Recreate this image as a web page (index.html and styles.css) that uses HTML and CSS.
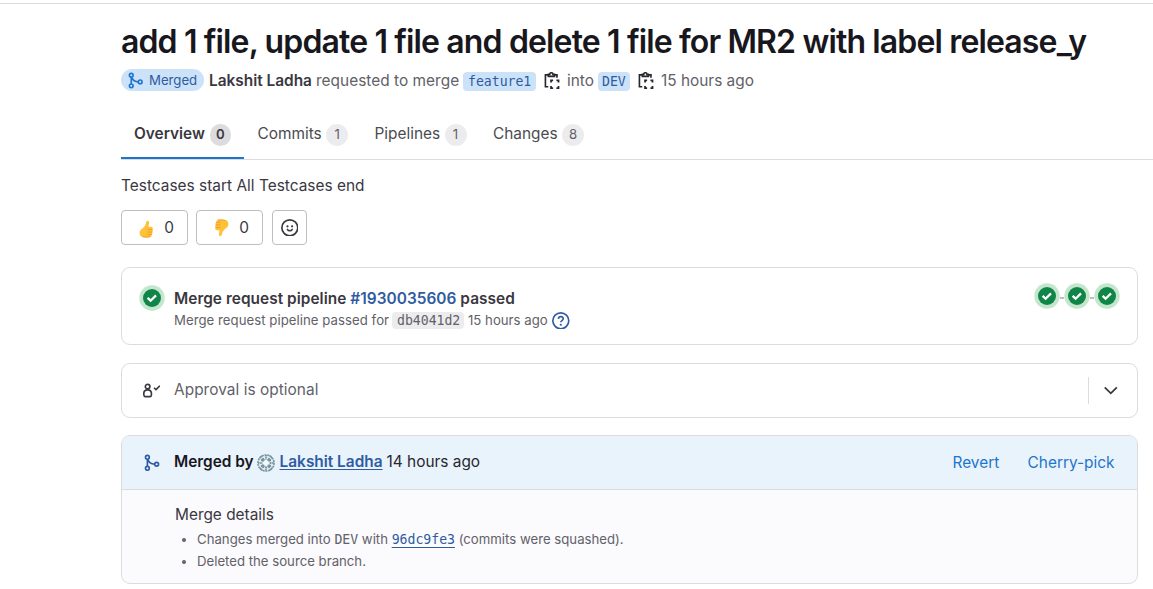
FILE: index.html
```html
<!DOCTYPE html>
<html lang="en">
<head>
<meta charset="utf-8">
<title>Merge request</title>
<link rel="stylesheet" href="styles.css">
</head>
<body>
<svg class="defs" width="0" height="0">
  <symbol id="merge" viewBox="0 0 16 16"><g fill="none" stroke="currentColor" stroke-width="1.5"><circle cx="4" cy="3" r="1.75"/><circle cx="4" cy="13" r="1.75"/><circle cx="12.4" cy="9.3" r="1.75"/><path d="M4 4.8v6.4M4.3 4.8c.8 2.7 3.2 4.4 6.3 4.5"/></g></symbol>
  <symbol id="copy" viewBox="0 0 16 16"><g fill="none" stroke="currentColor" stroke-width="1.5"><path d="M4.9 2.6H2.2v10.8h2.6M10.4 2.6h2.3v2.6"/><path d="M4.9 4V2.2h1.2a1.5 1.5 0 0 1 3 0h1.3V4z"/><path d="M7.3 9.6V7.7h1.9M12.2 7.7h1.9v1.9M14.1 12.7v1.9h-1.9M9.2 14.6H7.3v-1.9" stroke-width="1.6"/></g></symbol>
  <symbol id="check" viewBox="0 0 26 26"><circle cx="13" cy="13" r="12.7" fill="#c3e6cd"/><circle cx="13" cy="13" r="9" fill="#108548"/><path d="M8.6 12.9l3 2.8 5.4-5.3" fill="none" stroke="#fff" stroke-width="2.3"/></symbol>
  <symbol id="thumb" viewBox="0 0 15 18"><path d="M2 9.4C4.6 7.8 6.2 6 7 3.2 7.2.2 10.2 0 10.1 3L9.5 6.8h2.7c1.9 0 2 2 .9 2.6 1.2.6 1 2.2-.1 2.6.9.7.6 2.1-.4 2.5.3 1.3-.3 2.3-1.5 2.6-2.6.7-5.6.6-7.8-.1L1.6 16C.1 14.4.3 10.9 2 9.4z" fill="#ffc136"/><path d="M9 9.5h4M9 12.1h3.9M8.8 14.6h3.6M4 16.5c2.3.7 4.6.8 7 .4" fill="none" stroke="#ec9a30" stroke-width=".9" stroke-linecap="round"/></symbol>
</svg>
<main class="page">
  <h1 class="title">add 1 file, update 1 file and delete 1 file for MR2 with label release_y</h1>
  <div class="meta">
    <span class="state"><svg class="icon"><use href="#merge"/></svg><span>Merged</span></span>
    <strong class="author">Lakshit Ladha</strong>
    <span class="verb">requested to merge</span>
    <code class="branch branch-source">feature1</code>
    <svg class="icon copy"><use href="#copy"/></svg>
    <span class="into">into</span>
    <code class="branch branch-target">DEV</code>
    <svg class="icon copy"><use href="#copy"/></svg>
    <span class="ago">15 hours ago</span>
  </div>
  <nav class="tabs">
    <a class="tab active"><span>Overview</span><span class="count">0</span></a>
    <a class="tab commits"><span>Commits</span><span class="count">1</span></a>
    <a class="tab pipelines"><span>Pipelines</span><span class="count">1</span></a>
    <a class="tab changes"><span>Changes</span><span class="count">8</span></a>
  </nav>
  <p class="description">Testcases start All Testcases end</p>
  <div class="awards">
    <button class="award"><svg class="emoji"><use href="#thumb"/></svg><span>0</span></button>
    <button class="award"><svg class="emoji down"><use href="#thumb"/></svg><span>0</span></button>
    <button class="award react"><svg class="icon" viewBox="0 0 16 16"><circle cx="8" cy="8" r="7.25" fill="none" stroke="currentColor" stroke-width="1.5"/><circle cx="5.9" cy="6.7" r="1" fill="currentColor"/><circle cx="10.1" cy="6.7" r="1" fill="currentColor"/><path d="M5.8 9.4c.9 1.8 3.5 1.8 4.4 0" fill="none" stroke="currentColor" stroke-width="1.4" stroke-linecap="round"/></svg></button>
  </div>
  <section class="card pipeline">
    <svg class="status"><use href="#check"/></svg>
    <div class="pipeline-text">
      <div class="pipeline-title">Merge request pipeline <a>#1930035606</a> passed</div>
      <div class="pipeline-sub"><span class="passed-for">Merge request pipeline passed for</span><code class="sha">db4041d2</code><span class="sub-ago">15 hours ago</span><svg class="help icon" viewBox="0 0 16 16"><circle cx="8" cy="8" r="7.25" fill="none" stroke="currentColor" stroke-width="1.5"/><path d="M5.8 6.2C6 3.5 10.3 3.6 10.2 6.2c0 1.5-2.2 1.7-2.2 3.2" fill="none" stroke="currentColor" stroke-width="1.5"/><circle cx="8" cy="11.6" r="1" fill="currentColor"/></svg></div>
    </div>
    <div class="stages"><svg class="status"><use href="#check"/></svg><i></i><svg class="status"><use href="#check"/></svg><i></i><svg class="status"><use href="#check"/></svg></div>
  </section>
  <section class="card approval">
    <svg class="icon" viewBox="0 0 16 16"><g fill="none" stroke="currentColor" stroke-width="1.5"><circle cx="4.2" cy="4.2" r="2.1"/><path d="M4.2 7.1c-2.6 0-3.5 1.5-3.5 3.5 0 2.2.2 2.7 1.2 2.7h4.6c1 0 1.2-.5 1.2-2.7 0-2-.9-3.5-3.5-3.5z"/><path d="M10 5.2l1.8 1.8 3.6-3.6"/></g></svg>
    <span class="approval-text">Approval is optional</span>
    <span class="expand"><svg class="icon" viewBox="0 0 16 16"><path d="M2.5 5.7L8 11.2l5.5-5.5" fill="none" stroke="currentColor" stroke-width="1.6"/></svg></span>
  </section>
  <section class="card merged">
    <header class="merged-head">
      <svg class="icon"><use href="#merge"/></svg>
      <strong class="by">Merged by</strong>
      <svg class="avatar" viewBox="0 0 18 18"><circle cx="9" cy="9" r="8.8" fill="#dde8ec"/><g fill="none" stroke="#7895a5"><circle cx="9" cy="9" r="8.1" stroke-width="1.5" stroke-dasharray="2 .8"/><path d="M6 4v10M12 4v10M4 6h10M4 12h10" stroke-width="1.8"/><path d="M9 1v4M9 13v4M1 9h4M13 9h4" stroke-width="2" stroke-dasharray="1.4 .8"/><path d="M2.5 4.5l3-3M12.5 1.5l3 3M2.5 13.5l3 3M12.5 16.5l3-3" stroke-width="1.4"/></g><path d="M7.5 5.5h3v2h2v3h-2v2h-3v-2h-2v-3h2z" fill="#f4f8f9"/></svg>
      <a class="merger">Lakshit Ladha</a>
      <span class="merged-ago">14 hours ago</span>
      <a class="action revert">Revert</a>
      <a class="action pick">Cherry-pick</a>
    </header>
    <div class="details">
      <div class="details-title">Merge details</div>
      <ul>
        <li>Changes merged into <code>DEV</code> with <a><code>96dc9fe3</code></a> (commits were squashed).</li>
        <li>Deleted the source branch.</li>
      </ul>
    </div>
  </section>
</main>
</body>
</html>
```
FILE: styles.css
```css
* { box-sizing: border-box; }
body { margin: 0; background: #fff; color: #3a383f; font: 15.4px/22px Inter, "Noto Sans", sans-serif; overflow: hidden; }
.defs { display: block; position: absolute; }
code { font-family: "DejaVu Sans Mono", "Liberation Mono", monospace; font-size: 13.2px; letter-spacing: -.03px; }
.page { margin-top: 3px; border-top: 1px solid #dcdcde; padding-left: 121px; }
.title { margin: 18px 0 0; height: 40px; font-size: 32px; line-height: 40px; font-weight: 600; letter-spacing: -0.86px; color: #18171d; white-space: nowrap; }
.icon { display: block; flex: none; width: 17.6px; height: 17.6px; }
.meta { display: flex; align-items: center; margin-top: 8px; height: 22px; color: #626168; white-space: nowrap; }
.state { display: flex; align-items: center; width: 83px; height: 22px; margin: -2px 5px 0 0; padding-left: 6px; gap: 5px; border-radius: 11px; background: #cbe2f9; color: #2f5ca0; font-size: 13.2px; }
.state .icon { width: 17px; height: 17px; color: #1f75cb; }
.author { width: 107px; font-weight: 600; color: #3a383f; }
.verb { width: 147px; letter-spacing: .03px; }
.branch { height: 19px; line-height: 19px; padding: 0 5px; border-radius: 4px; background: #cbe2f9; color: #2f5ca0; }
.branch-source { width: 73px; }
.branch-target { width: 32px; padding: 0 4px; }
.copy { margin: -1px 6.4px 0 7px; color: #28272d; }
.into { width: 31px; }
.tabs { display: flex; height: 51px; margin-top: 17px; border-bottom: 1px solid #dcdcde; }
.tab { display: flex; align-items: flex-start; gap: 5px; padding: 14px 13px 0; height: 50px; color: #4c4b51; white-space: nowrap; }
.tab.active { width: 123px; font-weight: 600; color: #3a383f; box-shadow: inset 0 -2px #1f75cb; }
.tab .count { width: 22px; height: 22px; margin-top: 1px; border-radius: 11px; background: #ececef; color: #626168; text-align: center; font-size: 13.2px; line-height: 21px; font-weight: 400; }
.tab.active .count { background: #dcdcde; color: #3a383f; font-weight: 600; }
.commits, .pipelines { gap: 4.4px; padding: 14px 0 0 13.5px; }
.commits { width: 117px; }
.pipelines { width: 119px; }
.changes { gap: 4.4px; }
.description { margin: 15px 0 0; height: 22px; letter-spacing: .02px; }
.awards { display: flex; gap: 8px; margin-top: 13px; }
.award { display: flex; align-items: center; justify-content: flex-end; gap: 10px; width: 67px; height: 35px; padding: 0 13px 0 0; border: 1px solid #bfbfc3; border-radius: 4px; background: #fff; color: #3a383f; font: inherit; }
.react { width: 35px; margin-left: 1px; padding: 0; justify-content: center; }
.emoji { width: 15px; height: 18px; margin-top: 3px; }
.down { transform: rotate(180deg); margin-top: 1px; }
.card { width: 1017px; border: 1px solid #dcdcde; border-radius: 9px; }
.pipeline { display: flex; height: 78px; margin-top: 22px; padding: 18px 17.4px 18px 17px; }
.status { display: block; flex: none; width: 26px; height: 26px; }
.pipeline > .status { margin-top: -1px; }
.pipeline-text { margin: 2px 0 0 9px; flex: 1; white-space: nowrap; }
.pipeline-title { height: 21px; font-weight: 600; letter-spacing: .045px; }
.pipeline a { color: #2f5ca0; }
.pipeline-sub { display: flex; align-items: center; height: 22px; font-size: 13.2px; color: #626168; }
.passed-for { width: 218px; letter-spacing: .04px; }
.sha { height: 17px; line-height: 17px; width: 72px; padding: 0 5px; border-radius: 4px; background: #ececef; }
.sub-ago { margin-left: 4px; width: 84px; }
.help { color: #2f5ca0; margin-top: 1px; }
.stages { display: flex; align-items: center; height: 26px; margin-top: -3px; }
.stages i { width: 4px; height: 2px; margin-top: 3px; background: #bfbfc3; }
.approval { display: flex; align-items: center; height: 55px; margin-top: 18px; padding: 0 17px 0 20.6px; color: #3a383f; }
.approval-text { flex: 1; margin: -2px 0 0 13.8px; color: #626168; letter-spacing: .05px; }
.expand { display: flex; align-items: center; height: 27px; margin-top: -1px; padding-left: 13px; border-left: 1px solid #dcdcde; }
.merged { height: 149px; margin-top: 17px; background: #fbfafd; overflow: hidden; }
.merged-head { display: flex; align-items: center; height: 54px; padding: 0 22.5px 1px 21px; background: #e9f3fc; border-bottom: 1px solid #dcdcde; color: #28272d; white-space: nowrap; }
.merged-head > .icon { color: #2f5ca0; margin-top: 1px; }
.by { margin-left: 13.4px; width: 82.6px; font-weight: 600; color: #18171d; }
.avatar { width: 18px; height: 18px; margin: 2px 5px 0 0; }
.merger { width: 107px; color: #2f5ca0; font-weight: 600; text-decoration: underline; text-underline-offset: 2px; }
.merged-ago { flex: 1; }
.action { color: #1f75cb; margin-top: 2px; }
.pick { margin-left: 28.4px; }
.details { padding: 14px 0 0 53px; }
.details-title { color: #3a383f; }
.details ul { margin: 2px 0 0; padding-left: 22px; font-size: 13.2px; color: #626168; }
.details li { height: 22px; }
.details code { line-height: 1; }
.details a { color: #2f5ca0; text-decoration: underline; text-underline-offset: 3px; }
```
